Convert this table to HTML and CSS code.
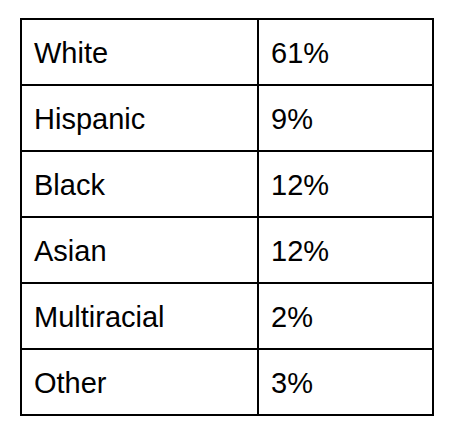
FILE: index.html
```html
<!DOCTYPE html>
<html>
<head>
<meta charset="utf-8">
<link rel="stylesheet" href="styles.css">
</head>
<body>
<table class="stats">
  <tr><td class="label">White</td><td class="value">61%</td></tr>
  <tr><td class="label">Hispanic</td><td class="value">9%</td></tr>
  <tr><td class="label">Black</td><td class="value">12%</td></tr>
  <tr><td class="label">Asian</td><td class="value">12%</td></tr>
  <tr><td class="label">Multiracial</td><td class="value">2%</td></tr>
  <tr><td class="label">Other</td><td class="value">3%</td></tr>
</table>
</body>
</html>
```
FILE: styles.css
```css
html, body {
  margin: 0;
  padding: 0;
  background: #ffffff;
}
body {
  padding: 18px 0 0 20px;
  font-family: "Liberation Sans", Arial, sans-serif;
  color: #000000;
}
.stats {
  border-collapse: separate;
  border-spacing: 0;
  border-left: 2px solid #000;
  border-top: 2px solid #000;
}
.stats td {
  box-sizing: border-box;
  height: 66px;
  padding: 2px 0 0 12px;
  border-right: 2px solid #000;
  border-bottom: 2px solid #000;
  font-size: 29px;
  line-height: 1;
  vertical-align: middle;
  white-space: nowrap;
}
.stats .label {
  width: 237px;
}
.stats .value {
  width: 175px;
}
```
